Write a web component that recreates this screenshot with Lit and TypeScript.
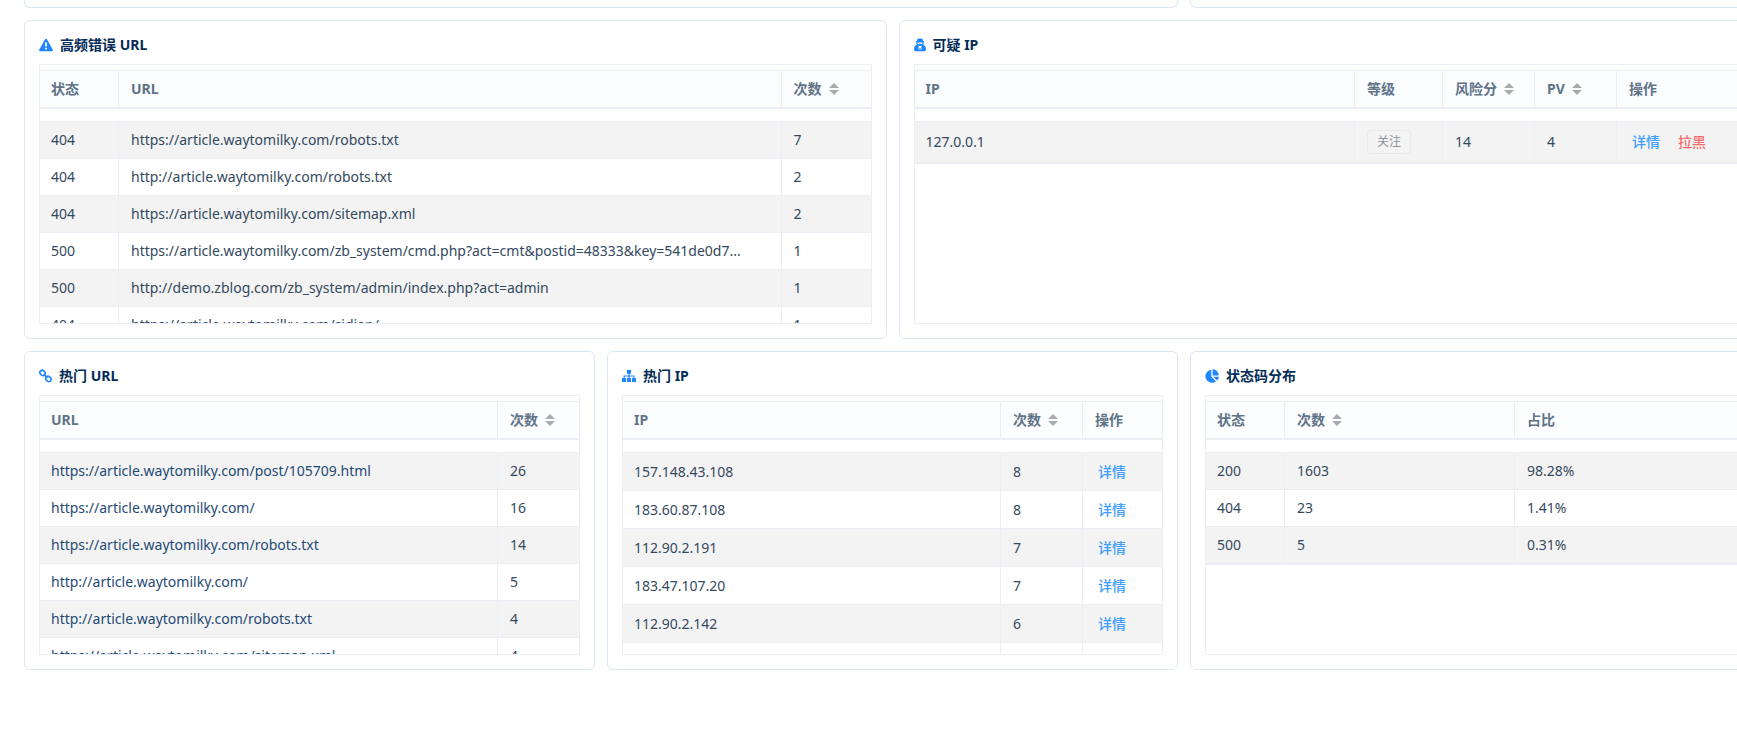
import { LitElement, html, svg, css, nothing, type TemplateResult } from "lit";
import { customElement, property } from "lit/decorators.js";
import { classMap } from "lit/directives/class-map.js";

interface Column {
  key: string;
  label: string;
  width?: number;
  sortable?: boolean;
  kind?: "path" | "tag" | "actions";
}

type Row = Record<string, string>;

interface Panel {
  icon: string;
  title: string;
  columns: Column[];
  rows: Row[];
  tall?: boolean;
}

const icons: Record<string, TemplateResult> = {
  warning: html`<svg viewBox="0 0 14 14" width="14" height="14">
    <path fill-rule="evenodd" d="M7 .8a1 1 0 0 1 .9.5l5.900 10.400a1 1 0 0 1-.9 1.500H1.100a1 1 0 0 1-.9-1.500L6.100 1.300A1 1 0 0 1 7 .800zM6 4.600l.2 4h1.600l.2-4zM6.100 9.800v1.800h1.800V9.800z"/>
  </svg>`,
  spy: html`<svg viewBox="0 0 12 14" width="12" height="14">
    <path fill-rule="evenodd" d="M4 .8c.7-.4 1.300 0 2 0s1.300-.4 2 0c.8.400 1 1.400 1.100 2.200.9.200 1.300.400 1.300.7 0 .300-.3.500-.8.600v1.300c0 .500 0 .8-.2 1.100 1.600.7 2.500 2.200 2.500 4v1.100c0 .8-.5 1.400-1.300 1.400H1.400C.6 13.200.1 12.600.1 11.800v-1.100c0-1.800.9-3.300 2.500-4-.2-.3-.2-.6-.2-1.100V4.300c-.5-.1-.8-.3-.8-.6 0-.3.4-.5 1.300-.7C3 2.200 3.200 1.200 4 .8zM3.500 4.600v.9c.300.4.8.5 1.300.4.500-.1.8-.4 1.200-.4s.7.300 1.200.4c.5.100 1 0 1.300-.4v-.9zM4 7.600l.8 1.200-.4 3h.6l1-2.400 1 2.400h.6l-.4-3L8 7.600l-1.300.5H5.300z"/>
  </svg>`,
  link: html`<svg viewBox="0 0 13 14" width="13" height="14">
    <g fill="none" stroke="currentColor" stroke-width="1.600">
      <rect x="-2.900" y="-2.200" width="5.800" height="4.400" rx="2.200" transform="translate(3.500 3.900) rotate(46)"/>
      <rect x="-2.900" y="-2.200" width="5.800" height="4.400" rx="2.200" transform="translate(9.400 9.900) rotate(46)"/>
      <path d="M4.600 5.100l3.700 3.700"/>
    </g>
  </svg>`,
  tree: html`<svg viewBox="0 0 14 14" width="14" height="14">
    <path d="M5 1h4v3.800H7.600v1.600h4.800v2.600H14V13h-4V9h1.300V7.500H7.600V9H9v4H5V9h1.400V7.500H2.700V9H4v4H0V9h1.600V6.400h4.800V4.800H5z"/>
  </svg>`,
  pie: html`<svg viewBox="0 0 14 14" width="14" height="14">
    <path d="M6.300.8v6.900l4.700 4.600A6.500 6.500 0 1 1 6.300.800zM7.600.2a6.300 6.300 0 0 1 6.100 6.200H7.600zM8.300 7.700h5.600a6 6 0 0 1-1.900 3.900z"/>
  </svg>`,
};

const caret = svg`<path d="M5 0l5 5H0z"/><path d="M0 7h10l-5 5z"/>`;

const article = "article.waytomilky.com";
const countCol = (width?: number): Column => ({ key: "count", label: "次数", width, sortable: true });

const upperPanels: Panel[] = [
  {
    icon: "warning",
    title: "高频错误 URL",
    columns: [{ key: "status", label: "状态", width: 79 }, { key: "url", label: "URL" }, countCol(89)],
    rows: [
      { status: "404", url: `https://${article}/robots.txt`, count: "7" },
      { status: "404", url: `http://${article}/robots.txt`, count: "2" },
      { status: "404", url: `https://${article}/sitemap.xml`, count: "2" },
      { status: "500", url: `https://${article}/zb_system/cmd.php?act=cmt&postid=48333&key=541de0d7...`, count: "1" },
      { status: "500", url: "http://demo.zblog.com/zb_system/admin/index.php?act=admin", count: "1" },
      { status: "404", url: `https://${article}/sidian/`, count: "1" },
    ],
  },
  {
    icon: "spy",
    title: "可疑 IP",
    columns: [
      { key: "ip", label: "IP" },
      { key: "level", label: "等级", width: 88, kind: "tag" },
      { key: "risk", label: "风险分", width: 92, sortable: true },
      { key: "pv", label: "PV", width: 82, sortable: true },
      { key: "actions", label: "操作", width: 128, kind: "actions" },
    ],
    rows: [{ ip: "127.0.0.1", level: "关注", risk: "14", pv: "4", actions: "详情,拉黑" }],
  },
];

const lowerPanels: Panel[] = [
  {
    icon: "link",
    title: "热门 URL",
    columns: [{ key: "url", label: "URL", kind: "path" }, countCol(81)],
    rows: [
      { url: `https://${article}/post/105709.html`, count: "26" },
      { url: `https://${article}/`, count: "16" },
      { url: `https://${article}/robots.txt`, count: "14" },
      { url: `http://${article}/`, count: "5" },
      { url: `http://${article}/robots.txt`, count: "4" },
      { url: `https://${article}/sitemap.xml`, count: "4" },
    ],
  },
  {
    icon: "tree",
    title: "热门 IP",
    tall: true,
    columns: [{ key: "ip", label: "IP" }, countCol(82), { key: "actions", label: "操作", width: 79, kind: "actions" }],
    rows: [
      { ip: "157.148.43.108", count: "8", actions: "详情" },
      { ip: "183.60.87.108", count: "8", actions: "详情" },
      { ip: "112.90.2.191", count: "7", actions: "详情" },
      { ip: "183.47.107.20", count: "7", actions: "详情" },
      { ip: "112.90.2.142", count: "6", actions: "详情" },
      { ip: "", count: "", actions: "" },
    ],
  },
  {
    icon: "pie",
    title: "状态码分布",
    columns: [{ key: "status", label: "状态", width: 79 }, countCol(), { key: "share", label: "占比" }],
    rows: [
      { status: "200", count: "1603", share: "98.28%" },
      { status: "404", count: "23", share: "1.41%" },
      { status: "500", count: "5", share: "0.31%" },
    ],
  },
];

@customElement("stat-panel")
export class StatPanel extends LitElement {
  @property({ attribute: false }) panel!: Panel;

  static styles = css`
    :host {
      display: block;
      min-width: 0;
      box-sizing: border-box;
      padding: 13px 14px 14px;
      border: 1px solid #dce7f5;
      border-radius: 6px;
      background: #fff;
    }
    .title {
      display: flex;
      align-items: center;
      gap: 7px;
      margin: 0 0 9px;
      font-size: 14px;
      line-height: 21px;
      font-weight: 700;
      color: #042c57;
    }
    .icon {
      display: flex;
      color: #1f86ff;
    }
    .icon svg {
      fill: currentColor;
    }
    .frame {
      height: 260px;
      box-sizing: border-box;
      overflow: hidden;
      border: 1px solid #ebeef5;
      padding-top: 5px;
    }
    table {
      width: 100%;
      table-layout: fixed;
      border-collapse: separate;
      border-spacing: 0;
      line-height: 22px;
    }
    .head th {
      border-top: 1px solid #ebeef5;
      border-bottom: 2px solid #ebeef5;
      background: #fbfdff;
      color: #607387;
      font-weight: 700;
      text-align: left;
    }
    .body {
      margin-top: 12px;
      border-top: 1px solid #ebeef5;
    }
    th,
    td {
      box-sizing: border-box;
      padding: 7px 12px;
      overflow: hidden;
      white-space: nowrap;
      text-overflow: ellipsis;
      border-right: 1px solid #ebeef5;
    }
    td {
      border-bottom: 1px solid #ebeef5;
    }
    th:first-child,
    td:first-child {
      padding-left: 11px;
    }
    th:last-child,
    td:last-child {
      border-right: 0;
    }
    .short tr:last-child td {
      border-bottom-width: 2px;
    }
    .tall td {
      height: 38px;
    }
    tr:nth-child(odd) td {
      background: #f3f3f3;
    }
    tr td.path {
      color: #1f4a75;
    }
    .sort {
      display: inline-flex;
      align-items: center;
      gap: 7px;
      padding: 0;
      border: 0;
      background: none;
      color: inherit;
      font: inherit;
    }
    .sort svg {
      fill: #a8abb2;
    }
    .tag {
      display: block;
      width: max-content;
      margin: 1px 0;
      padding: 0 9px;
      border: 1px solid #e9e9eb;
      border-radius: 4px;
      background: #f4f4f5;
      color: #909399;
      font-size: 12px;
      line-height: 22px;
    }
    .actions {
      display: flex;
      gap: 18px;
      padding: 0 3px;
    }
    .action {
      padding: 0;
      border: 0;
      background: none;
      color: #409eff;
      font: inherit;
      font-weight: 500;
    }
    .danger {
      color: #f56c6c;
    }
  `;

  private cell(col: Column, value: string) {
    if (!value) return nothing;
    if (col.kind === "tag") return html`<span class="tag">${value}</span>`;
    if (col.kind === "actions") {
      return html`<div class="actions">
        ${value.split(",").map(
          (name) => html`<button type="button" class=${classMap({ action: true, danger: name === "拉黑" })}>${name}</button>`
        )}
      </div>`;
    }
    return value;
  }

  private heading(col: Column) {
    return col.sortable
      ? html`<button type="button" class="sort">${col.label}<svg viewBox="0 0 10 12" width="10" height="12">${caret}</svg></button>`
      : col.label;
  }

  render() {
    const { icon, title, columns, rows, tall } = this.panel;
    const cols = html`<colgroup>
      ${columns.map((c) => (c.width ? html`<col width=${c.width} />` : html`<col />`))}
    </colgroup>`;
    return html`
      <h2 class="title"><span class="icon">${icons[icon]}</span>${title}</h2>
      <div class="frame">
        <table class="head">
          ${cols}
          <thead>
            <tr>${columns.map((c) => html`<th scope="col">${this.heading(c)}</th>`)}</tr>
          </thead>
        </table>
        <table class=${classMap({ body: true, tall: !!tall, short: rows.length < 6 })} aria-label=${title}>
          ${cols}
          <tbody>
            ${rows.map(
              (row) => html`<tr>
                ${columns.map((c) => html`<td class=${classMap({ path: c.kind === "path" })}>${this.cell(c, row[c.key])}</td>`)}
              </tr>`
            )}
          </tbody>
        </table>
      </div>
    `;
  }
}

@customElement("app-root")
export class AppRoot extends LitElement {
  static styles = css`
    :host {
      display: block;
      overflow: hidden;
      background: #fff;
      color: #34495e;
      font-family: "Noto Sans", "Noto Sans CJK SC", sans-serif;
      font-size: 14px;
    }
    .board {
      display: grid;
      gap: 12px;
      margin: 0 -24px 0 24px;
      padding-bottom: 65px;
    }
    .row {
      display: grid;
      grid-template-columns: repeat(2, minmax(0, 1fr));
      gap: 12px;
    }
    .thirds {
      grid-template-columns: repeat(3, minmax(0, 1fr));
    }
    .stub {
      box-sizing: border-box;
      height: 8px;
      border: 1px solid #dce7f5;
      border-top: 0;
      border-radius: 0 0 6px 6px;
    }
    .wide {
      grid-column: span 2;
    }
  `;

  render() {
    return html`
      <main class="board">
        <div class="row thirds">
          <div class="stub wide"></div>
          <div class="stub"></div>
        </div>
        <div class="row">${upperPanels.map((p) => html`<stat-panel .panel=${p}></stat-panel>`)}</div>
        <div class="row thirds">${lowerPanels.map((p) => html`<stat-panel .panel=${p}></stat-panel>`)}</div>
      </main>
    `;
  }
}
